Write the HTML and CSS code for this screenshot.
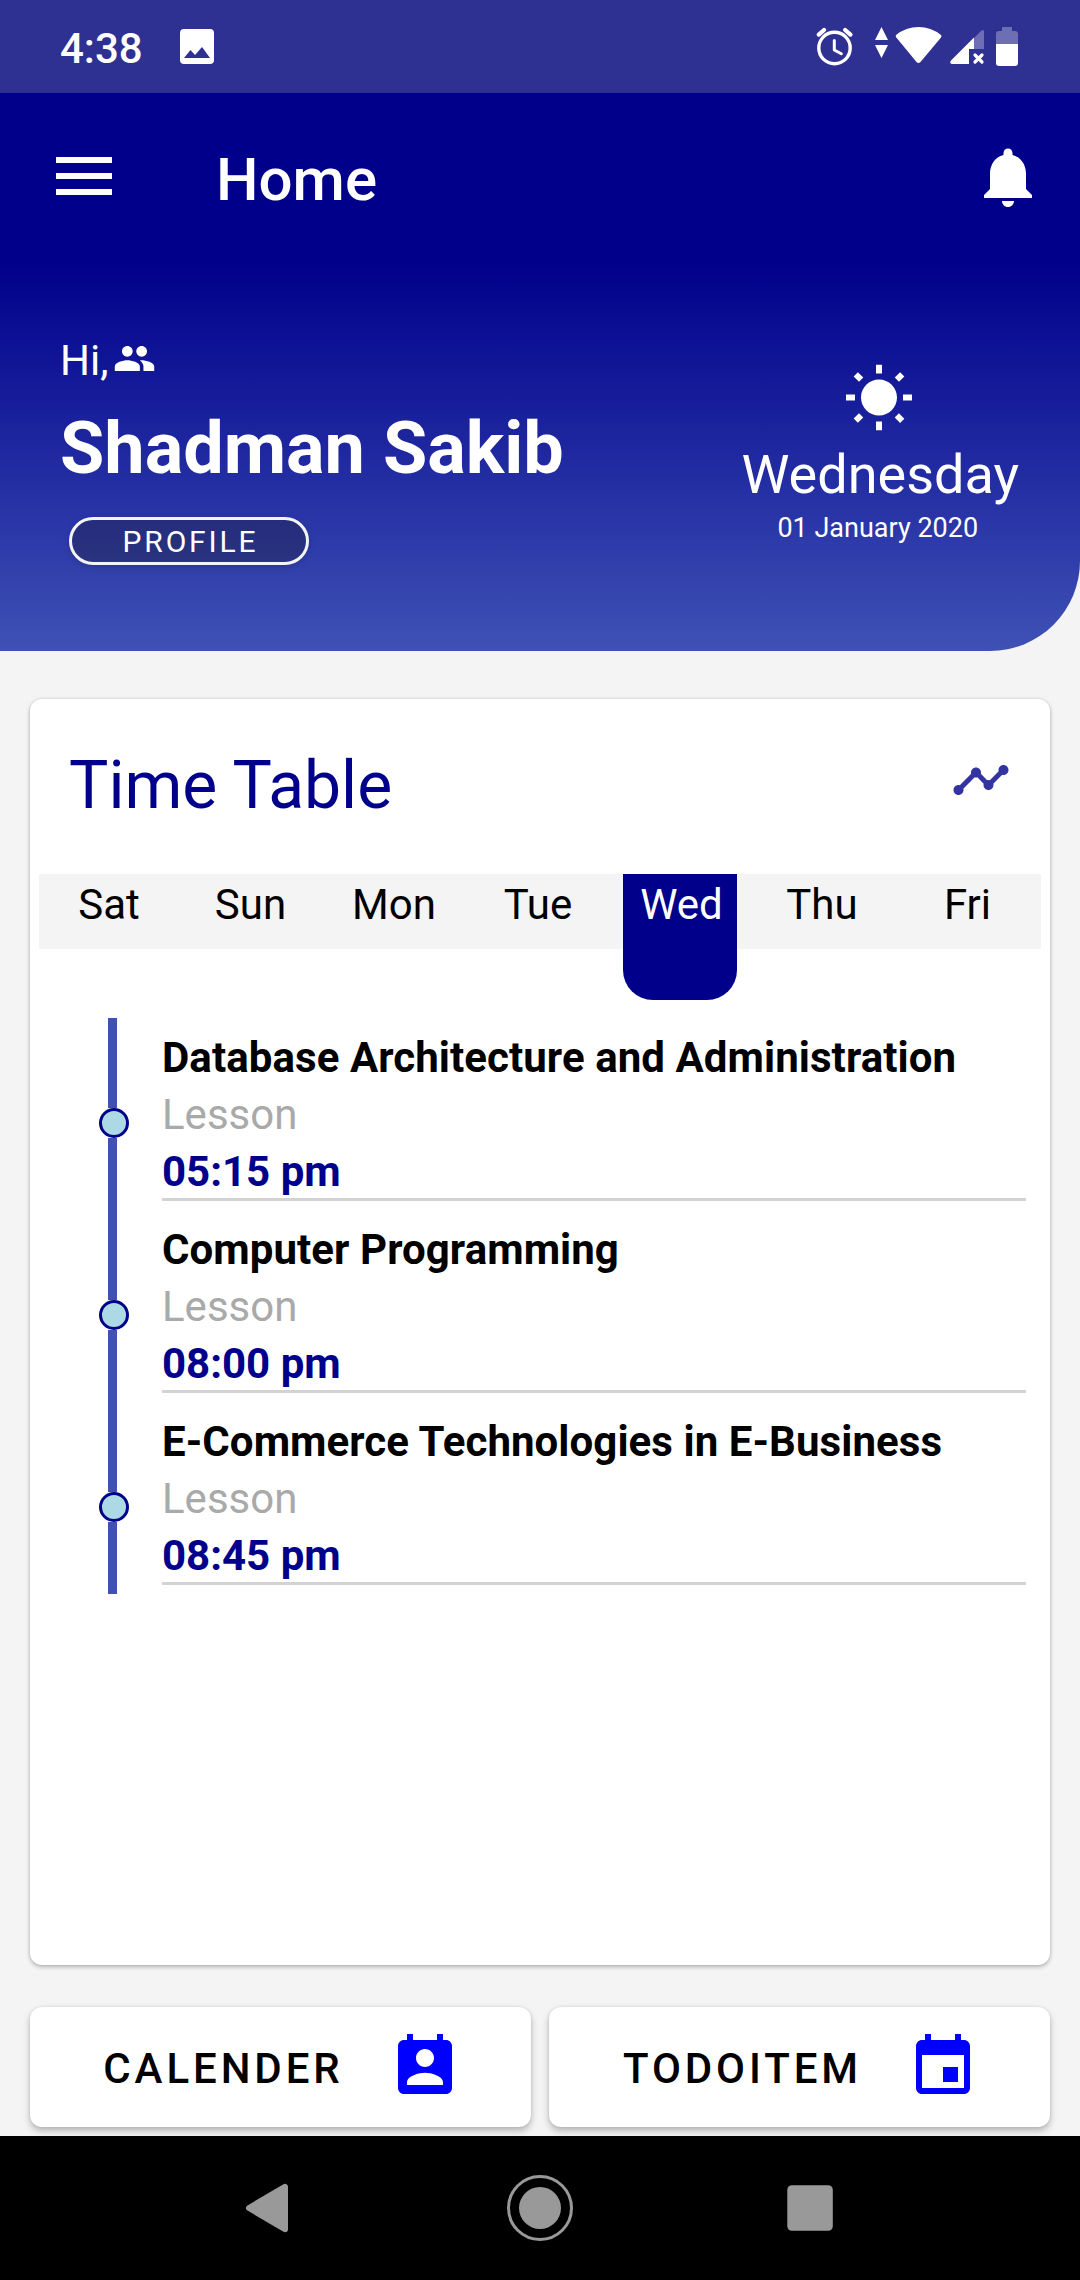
FILE: index.html
```html
<!DOCTYPE html>
<html lang="en">
<head>
<meta charset="utf-8">
<title>Home</title>
<link rel="stylesheet" href="styles.css">
</head>
<body>
<div class="screen">
  <div class="status-bar">
    <span class="clock">4:38</span>
    <svg class="photo" width="34" height="35" viewBox="0 0 34 35"><path fill="#fff" fill-rule="evenodd" d="M4 0H30Q34 0 34 4V31Q34 35 30 35H4Q0 35 0 31V4Q0 0 4 0ZM4 29H30L22 18L15 26L10.500 21Z"/></svg>
    <svg class="indicators" width="204" height="42" viewBox="816 26 204 42">
      <g fill="none" stroke="#fff" stroke-linecap="round" stroke-linejoin="round">
        <circle cx="834.500" cy="48" r="15.700" stroke-width="3.400"/>
        <path stroke-width="3" d="M834.300 40.500V50L841.300 53.800"/>
        <path stroke-width="4.200" d="M818.800 34.600L824 30M845.200 30L850.400 34.600"/>
      </g>
      <g fill="#fff">
        <path d="M881.500 27L888 40H875ZM875 45H888L881.500 58Z"/>
        <path d="M896 35Q906 27 918.500 27T941 35Q942 36 941 37.500L920.500 62Q918.500 64 916.500 62L896.300 37.500Q895.300 36 896 35Z"/>
        <path fill-opacity=".3" d="M974 38L981 31Q984 28.500 984 32V49H974Z"/>
        <path d="M974 37.500V49H969V64H952Q949 63 951 60.500Z"/>
        <path fill-opacity=".3" d="M1002 27H1012V31H1015Q1018 31 1018 34V44H996V34Q996 31 999 31H1002Z"/>
        <path d="M996 44H1018V63Q1018 66 1015 66H999Q996 66 996 63Z"/>
      </g>
      <path fill="none" stroke="#fff" stroke-width="3.200" stroke-linecap="round" d="M975 55L982 62M982 55L975 62"/>
    </svg>
  </div>

  <header class="app-bar">
    <svg class="menu" width="56" height="38" viewBox="0 0 56 38"><path fill="#fff" d="M0 0H56V6H0ZM0 16H56V22H0ZM0 32H56V38H0Z"/></svg>
    <h1 class="page-title">Home</h1>
    <svg class="bell" width="72" height="72" viewBox="0 0 24 24"><path fill="#fff" d="M12 22c1.100 0 2-.9 2-2h-4c0 1.100.89 2 2 2zm6-6v-5c0-3.070-1.640-5.640-4.500-6.320V4c0-.83-.67-1.500-1.500-1.500s-1.500.67-1.500 1.500v.68C7.630 5.360 6 7.920 6 11v5l-2 2v1h16v-1l-2-2z"/></svg>
  </header>

  <section class="hero">
    <div class="user">
      <div class="greeting"><span>Hi,</span><svg class="people" width="43" height="43" viewBox="0 0 24 24"><path fill="#fff" d="M16 11c1.660 0 2.990-1.340 2.990-3S17.660 5 16 5c-1.660 0-3 1.340-3 3s1.340 3 3 3zm-8 0c1.660 0 2.990-1.340 2.990-3S9.660 5 8 5C6.340 5 5 6.340 5 8s1.340 3 3 3zm0 2c-2.330 0-7 1.170-7 3.500V19h14v-2.500c0-2.330-4.670-3.500-7-3.500zm8 0c-.29 0-.62.02-.97.05 1.160.84 1.970 1.970 1.970 3.450V19h6v-2.500c0-2.330-4.670-3.500-7-3.500z"/></svg></div>
      <div class="name">Shadman Sakib</div>
      <div class="profile">PROFILE</div>
    </div>
    <div class="today">
      <svg class="sun" width="72" height="72" viewBox="0 0 24 24"><path fill="#fff" d="M6.760 4.840l-1.800-1.790-1.410 1.410 1.790 1.790 1.420-1.410zM4 10.500H1v2h3v-2zm9-9.950h-2V3.500h2V.55zm7.450 3.910l-1.410-1.410-1.790 1.790 1.410 1.410 1.790-1.790zm-3.210 13.700l1.790 1.800 1.410-1.410-1.800-1.790-1.400 1.400zM20 10.500v2h3v-2h-3zm-8-5c-3.310 0-6 2.690-6 6s2.690 6 6 6 6-2.690 6-6-2.690-6-6-6zm-1 16.950h2V19.500h-2v2.950zm-7.450-3.910l1.410 1.410 1.790-1.800-1.410-1.410-1.790 1.800z"/></svg>
      <div class="weekday">Wednesday</div>
      <div class="date">01 January 2020</div>
    </div>
  </section>

  <main class="content">
    <section class="timetable">
      <div class="card-head">
        <h2 class="card-title">Time Table</h2>
        <svg class="trend" width="60" height="60" viewBox="0 0 24 24"><path fill="#3333a2" d="M23 8c0 1.100-.9 2-2 2-.18 0-.35-.02-.51-.07l-3.560 3.550c.05.16.07.34.07.52 0 1.100-.9 2-2 2s-2-.9-2-2c0-.18.02-.36.07-.52l-2.550-2.550c-.16.05-.34.07-.52.07s-.36-.02-.52-.07l-4.550 4.560c.05.16.07.33.07.51 0 1.100-.9 2-2 2s-2-.9-2-2 .9-2 2-2c.18 0 .35.02.51.07l4.560-4.550C8.020 9.360 8 9.180 8 9c0-1.100.9-2 2-2s2 .9 2 2c0 .18-.02.36-.07.52l2.550 2.550c.16-.05.34-.07.52-.07s.36.02.52.07l3.550-3.560C19.020 8.350 19 8.180 19 8c0-1.100.9-2 2-2s2 .9 2 2z"/></svg>
      </div>
      <div class="days">
        <span class="day">Sat</span><span class="day">Sun</span><span class="day">Mon</span><span class="day">Tue</span><span class="day selected">Wed</span><span class="day">Thu</span><span class="day">Fri</span>
      </div>
      <div class="lessons">
        <div class="lesson">
          <div class="rail"><i class="line before"></i><i class="dot"></i><i class="line after"></i></div>
          <div class="details"><div class="subject">Database Architecture and Administration</div><div class="kind">Lesson</div><div class="time">05:15 pm</div></div>
        </div>
        <div class="lesson">
          <div class="rail"><i class="line before"></i><i class="dot"></i><i class="line after"></i></div>
          <div class="details"><div class="subject">Computer Programming</div><div class="kind">Lesson</div><div class="time">08:00 pm</div></div>
        </div>
        <div class="lesson">
          <div class="rail"><i class="line before"></i><i class="dot"></i><i class="line after"></i></div>
          <div class="details"><div class="subject">E-Commerce Technologies in E-Business</div><div class="kind">Lesson</div><div class="time">08:45 pm</div></div>
        </div>
      </div>
    </section>

    <div class="actions">
      <div class="action"><span>CALENDER</span><svg width="72" height="72" viewBox="0 0 24 24"><path fill="#00f" d="M19 3h-1V1h-2v2H8V1H6v2H5c-1.110 0-2 .9-2 2v14c0 1.100.89 2 2 2h14c1.100 0 2-.9 2-2V5c0-1.100-.9-2-2-2zm-7 3c1.660 0 3 1.340 3 3s-1.340 3-3 3-3-1.340-3-3 1.340-3 3-3zm6 12H6v-1c0-2 4-3.100 6-3.100s6 1.100 6 3.100v1z"/></svg></div>
      <div class="action"><span>TODOITEM</span><svg width="72" height="72" viewBox="0 0 24 24"><path fill="#00f" d="M17 12h-5v5h5v-5zM16 1v2H8V1H6v2H5c-1.110 0-1.990.9-1.990 2L3 19c0 1.100.89 2 2 2h14c1.100 0 2-.9 2-2V5c0-1.100-.9-2-2-2h-1V1h-2zm3 18H5V8h14v11z"/></svg></div>
    </div>
  </main>

  <nav class="nav-bar">
    <svg width="66" height="66" viewBox="0 0 66 66"><path fill="#999" stroke="#999" stroke-width="6" stroke-linejoin="round" d="M12 33L48 11.800V54.200Z"/></svg>
    <svg width="66" height="66" viewBox="0 0 66 66"><circle cx="33" cy="33" r="31.500" fill="none" stroke="#999" stroke-width="3"/><circle cx="33" cy="33" r="21" fill="#999"/></svg>
    <svg width="66" height="66" viewBox="0 0 66 66"><rect x="10.300" y="10.300" width="45.500" height="45.500" rx="4.500" fill="#999"/></svg>
  </nav>
</div>
</body>
</html>
```
FILE: styles.css
```css
* {
  box-sizing: border-box;
}

body {
  margin: 0;
  font-family: Roboto, sans-serif;
  font-size: 42px;
  color: #000;
}

svg {
  display: block;
  flex: none;
}

h1,
h2 {
  margin: 0;
  font-weight: 400;
}

.screen {
  width: 1080px;
  height: 2280px;
  display: flex;
  flex-direction: column;
  overflow: hidden;
  background: #f4f4f4;
}

.status-bar {
  height: 93px;
  display: flex;
  align-items: center;
  padding: 0 60px;
  background: #2e3092;
  color: #fff;
}

.clock {
  font-weight: 500;
  padding-top: 4px;
}

.photo {
  margin-left: 37px;
}

.indicators {
  margin-left: auto;
}

.app-bar {
  height: 168px;
  display: flex;
  align-items: center;
  padding: 0 36px 0 56px;
  background: #00008b;
  color: #fff;
}

.menu {
  margin-bottom: 2px;
}

.page-title {
  margin-left: 104px;
  padding-top: 4px;
  font-size: 60px;
  font-weight: 500;
}

.bell {
  margin-left: auto;
}

.hero {
  height: 390px;
  display: flex;
  justify-content: space-between;
  align-items: flex-start;
  padding: 0 61px 0 60px;
  border-bottom-right-radius: 90px;
  background: linear-gradient(#00008b, #3f51b5);
  color: #fff;
}

.user {
  padding-top: 75px;
}

.greeting {
  display: flex;
  line-height: 50px;
}

.people {
  margin: 1px 0 0 5px;
}

.name {
  margin-top: 21px;
  font-size: 72px;
  font-weight: 700;
  line-height: 84px;
}

.profile {
  width: 240px;
  height: 48px;
  margin: 26px 0 0 9px;
  padding-left: 3px;
  border: 3px solid #f4f4f4;
  border-radius: 24px;
  background: rgba(25, 25, 25, 0.3);
  box-shadow: 0 2px 6px rgba(0, 0, 0, 0.15);
  font-size: 30px;
  line-height: 44px;
  letter-spacing: 2.850px;
  text-align: center;
}

.today {
  display: flex;
  flex-direction: column;
  align-items: center;
  padding-top: 102px;
}

.sun {
  margin-right: 2px;
}

.weekday {
  margin-top: 8px;
  font-size: 54px;
  line-height: 64px;
}

.date {
  margin: 5px 5px 0 0;
  font-size: 27px;
  line-height: 32px;
}

.content {
  flex: 1;
  display: flex;
  flex-direction: column;
  gap: 42px;
  padding: 48px 30px 0;
}

.timetable {
  height: 1266px;
  padding: 0 9px;
  border-radius: 12px;
  background: #fff;
  box-shadow: 0 2px 4px rgba(0, 0, 0, 0.25), 0 0 3px rgba(0, 0, 0, 0.12);
}

.card-head {
  height: 175px;
  display: flex;
  justify-content: space-between;
  align-items: flex-start;
  padding: 48px 30px 0;
}

.card-title {
  font-size: 66px;
  line-height: 78px;
  color: #00008b;
}

.trend {
  margin-top: 3px;
}

.days {
  height: 75px;
  display: grid;
  grid-template-columns: 140px 143px 144px 144px 140px 144px 147px;
  justify-items: center;
  align-items: start;
  background: #f4f4f4;
}

.day {
  line-height: 50px;
  padding-top: 6px;
}

.selected {
  width: 114px;
  height: 126px;
  padding-left: 3px;
  border-radius: 0 0 30px 30px;
  background: #00008b;
  color: #fff;
  text-align: center;
}

.lessons {
  padding: 69px 15px 0 60px;
}

.lesson {
  height: 192px;
  display: flex;
  gap: 33px;
}

.rail {
  width: 30px;
  display: flex;
  flex-direction: column;
}

.line {
  width: 9px;
  margin-left: 9px;
  background: #3f51b5;
}

.before {
  height: 90px;
}

.after {
  flex: 1;
}

.dot {
  width: 30px;
  height: 30px;
  border: 3px solid #00008b;
  border-radius: 50%;
  background: #add8e6;
}

.details {
  flex: 1;
  height: 183px;
  padding-top: 11px;
  border-bottom: 3px solid #d3d3d3;
  line-height: 57px;
}

.subject {
  font-weight: 700;
  letter-spacing: 0.070px;
}

.kind {
  color: #a9a9a9;
}

.time {
  padding-top: 2px;
  line-height: 53px;
  font-weight: 700;
  color: #00008b;
}

.actions {
  display: grid;
  grid-template-columns: 1fr 1fr;
  gap: 18px;
}

.action {
  height: 120px;
  display: flex;
  justify-content: center;
  align-items: center;
  gap: 45px;
  padding-left: 3px;
  border-radius: 12px;
  background: #fff;
  box-shadow: 0 4px 7px rgba(0, 0, 0, 0.25), 0 0 3px rgba(0, 0, 0, 0.1);
  font-weight: 500;
  letter-spacing: 3.920px;
}

.action span {
  padding-top: 2px;
}

.nav-bar {
  position: relative;
  height: 144px;
  display: flex;
  justify-content: center;
  align-items: center;
  gap: 204px;
  background: #000;
}
```
